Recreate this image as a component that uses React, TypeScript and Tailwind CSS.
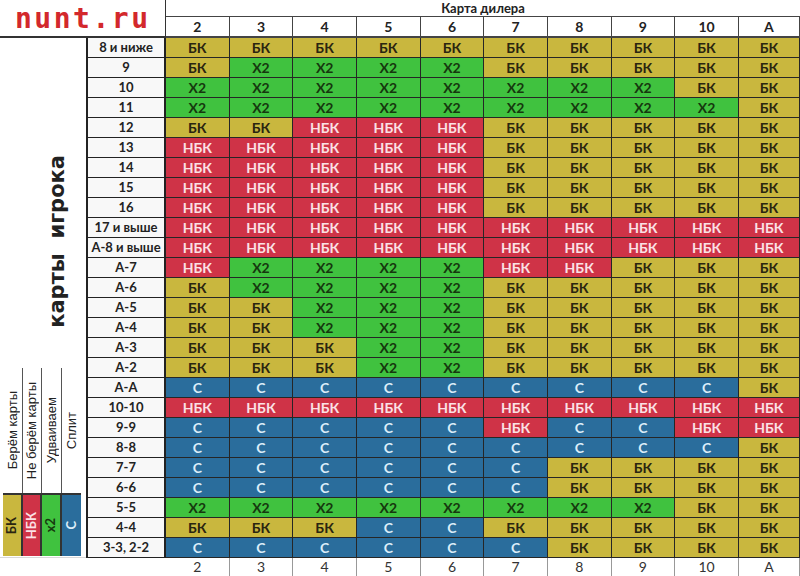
const DEALER = ['2', '3', '4', '5', '6', '7', '8', '9', '10', 'A'];

// h = берём, s = не берём, d = удваиваем, p = сплит
const ROWS: [string, string][] = [
  ['8 и ниже', 'hhhhhhhhhh'],
  ['9', 'hddddhhhhh'],
  ['10', 'ddddddddhh'],
  ['11', 'dddddddddh'],
  ['12', 'hhssshhhhh'],
  ['13', 'ssssshhhhh'],
  ['14', 'ssssshhhhh'],
  ['15', 'ssssshhhhh'],
  ['16', 'ssssshhhhh'],
  ['17 и выше', 'ssssssssss'],
  ['А-8 и выше', 'ssssssssss'],
  ['А-7', 'sddddsshhh'],
  ['А-6', 'hddddhhhhh'],
  ['А-5', 'hhdddhhhhh'],
  ['А-4', 'hhdddhhhhh'],
  ['А-3', 'hhhddhhhhh'],
  ['А-2', 'hhhddhhhhh'],
  ['А-А', 'ppppppppph'],
  ['10-10', 'ssssssssss'],
  ['9-9', 'pppppsppss'],
  ['8-8', 'ppppppppph'],
  ['7-7', 'pppppphhhh'],
  ['6-6', 'pppppphhhh'],
  ['5-5', 'ddddddddhh'],
  ['4-4', 'hhhpphhhhh'],
  ['3-3, 2-2', 'pppppphhhh'],
];

const ACTS: Record<string, { label: string; cls: string }> = {
  h: { label: 'БК', cls: 'bg-[#c9b73e] text-[#2a2510]' },
  s: { label: 'НБК', cls: 'bg-[#cf3347] text-[#fbe1e5]' },
  d: { label: 'X2', cls: 'bg-[#40c23f] text-[#16380e]' },
  p: { label: 'С', cls: 'bg-[#2a6d9c] text-[#dcedf9]' },
};

const LEGEND = [
  { text: 'Берём карты', act: 'h' },
  { text: 'Не берём карты', act: 's' },
  { text: 'Удваиваем', act: 'd', short: 'x2' },
  { text: 'Сплит', act: 'p' },
];

function LeftPanel() {
  return (
    <div className="row-span-26 flex flex-col bg-white">
      <div className="h-[330px] pt-[117px] pl-[45px]">
        <span className="[writing-mode:vertical-rl] rotate-180 font-['DejaVu_Sans',sans-serif] font-bold text-[21px] leading-[24px] text-[#222] whitespace-pre">
          карты  игрока
        </span>
      </div>
      <div className="ml-[3px] w-[78px] flex flex-col">
        <div className="h-[125px] grid grid-cols-4">
          {LEGEND.map((l, i) => (
            <div
              key={l.text}
              className={`flex items-center justify-center ${i < 3 ? 'border-r border-[#555]' : ''}`}
            >
              <span className="[writing-mode:vertical-rl] rotate-180 font-['Liberation_Sans',sans-serif] text-[13px] leading-none text-[#222] whitespace-nowrap">
                {l.text}
              </span>
            </div>
          ))}
        </div>
        <div className="h-[63px] grid grid-cols-4 border-t-2 border-[#333]">
          {LEGEND.map((l, i) => (
            <div
              key={l.text}
              className={`flex items-center justify-center ${ACTS[l.act].cls} ${i < 3 ? 'border-r-2 border-[#333]' : ''}`}
            >
              <span className="[writing-mode:vertical-rl] rotate-180 font-['Lato',sans-serif] font-bold text-[13px] leading-none">
                {l.short ?? ACTS[l.act].label}
              </span>
            </div>
          ))}
        </div>
      </div>
      <div className="mt-[1px] border-t border-[#d8d8d8]" />
    </div>
  );
}

export default function App() {
  return (
    <div className="w-[800px] h-[576px] overflow-hidden bg-white font-['Lato',sans-serif] grid grid-cols-[86px_80px_repeat(9,63.67px)_1fr] grid-rows-[17px_21px_repeat(26,20px)_1fr]">
      {/* logo */}
      <div className="col-span-2 row-span-2 border-r border-b-2 border-[#333] flex items-center pl-[15px] pt-[1px]">
        <span className="font-['DejaVu_Sans_Mono',monospace] font-bold text-[28px] leading-none tracking-[2.5px] text-[#d3282c]">
          nunt.ru
        </span>
      </div>

      <div className="col-span-10 border-b border-[#444] flex items-center justify-center text-[13px] font-bold text-[#222] leading-none">
        Карта дилера
      </div>
      {DEALER.map((d) => (
        <div
          key={'t' + d}
          className="border-r border-b-2 border-[#444] flex items-center justify-center text-[14px] font-bold text-[#222] leading-none"
        >
          {d}
        </div>
      ))}

      <LeftPanel />

      {ROWS.map(([label, acts], r) => (
        <div key={label} className="contents">
          <div
            className="border-x-2 border-b border-[#222] bg-[#f8f8f8] flex items-center justify-center text-[13px] font-bold text-[#222] leading-none whitespace-nowrap"
            style={{ gridRow: r + 3, gridColumn: 2 }}
          >
            {label}
          </div>
          {acts.split('').map((a, c) => (
            <div
              key={c}
              className={`border-r border-b border-[#262626] flex items-center justify-center text-[14px] font-bold leading-none ${ACTS[a].cls}`}
              style={{ gridRow: r + 3, gridColumn: c + 3 }}
            >
              {ACTS[a].label}
            </div>
          ))}
        </div>
      ))}

      <div className="col-span-2 bg-white" />
      {DEALER.map((d) => (
        <div
          key={'b' + d}
          className="border-r border-[#999] flex items-center justify-center text-[14px] text-[#333] leading-none"
        >
          {d}
        </div>
      ))}
    </div>
  );
}
